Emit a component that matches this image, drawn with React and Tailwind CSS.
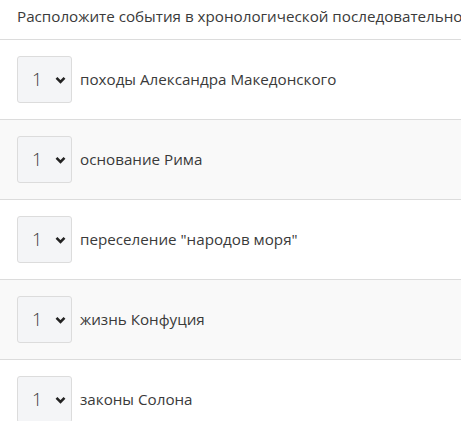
const items = [
  'походы Александра Македонского',
  'основание Рима',
  'переселение "народов моря"',
  'жизнь Конфуция',
  'законы Солона',
];

function Chevron() {
  return (
    <svg width="11" height="8" viewBox="0 0 11 8" className="shrink-0">
      <path d="M1.5 1.8 L5.5 5.8 L9.5 1.8" fill="none" stroke="#222" strokeWidth="2.6" />
    </svg>
  );
}

export default function App() {
  return (
    <div className="w-[461px] h-[421px] overflow-hidden bg-white text-[#3a3a3a] font-['Open_Sans',sans-serif]">
      <div className="h-[39px] pl-[17px] pt-[4px] text-[15.2px] leading-6 whitespace-nowrap">
        Расположите события в хронологической последовательности
      </div>
      {items.map((text, i) => (
        <div
          key={i}
          className={`flex items-center gap-2 pl-[17px] py-4 border-t border-[#dcdcdc] first:border-t-0 ${i % 2 === 1 ? 'bg-[#f9f9f9]' : 'bg-white'}`}
        >
          <div className="w-[55px] h-[47px] flex items-center justify-between pl-[14px] pr-[5px] rounded-[3px] border border-[#dcdcdc] bg-[#f4f5f7] text-[18px] font-light">
            <span>1</span>
            <Chevron />
          </div>
          <span className="text-[15.2px]">{text}</span>
        </div>
      ))}
    </div>
  );
}
